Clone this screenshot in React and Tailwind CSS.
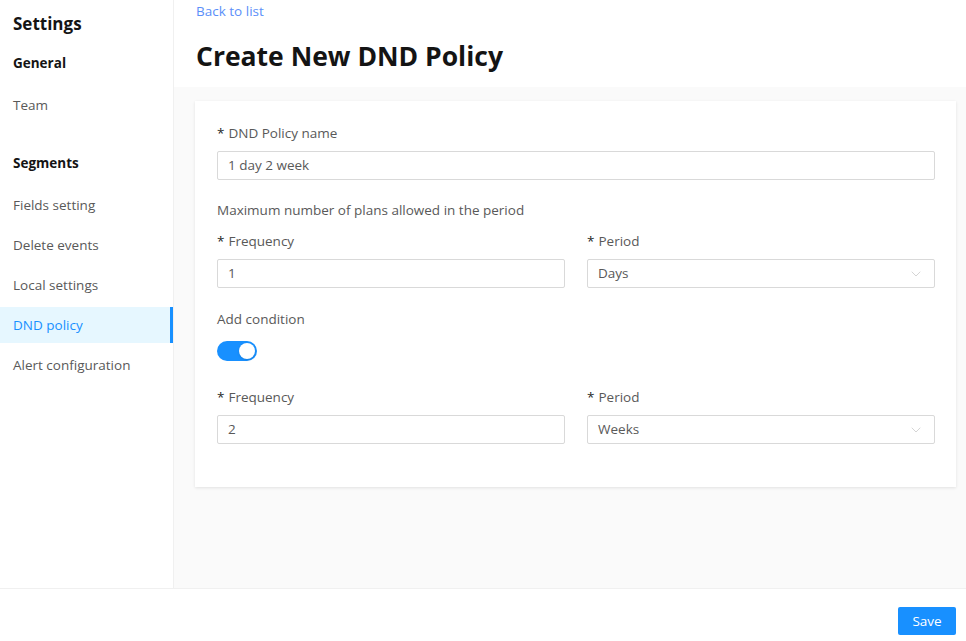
import React, { useState } from 'react';
import { ChevronDown } from 'lucide-react';

const font = { fontFamily: '"Open Sans", "Noto Sans", sans-serif' };

const NavItem = ({ label, active }) => (
  <div
    className={`h-[36px] flex items-center pl-[13px] text-[13.5px] ${
      active ? 'bg-[#e6f7ff] text-[#1890ff] border-r-[3px] border-[#1890ff]' : 'text-[#595959]'
    }`}
  >
    {label}
  </div>
);

const Label = ({ children, required }) => (
  <div className="h-[22px] flex items-center text-[13.5px] text-[#595959] mb-[7px]">
    {required && <span className="text-[#262626] mr-[4px]">*</span>}
    {children}
  </div>
);

const Input = ({ value }) => (
  <div className="h-[29px] border border-[#d9d9d9] rounded-[2px] px-[10px] flex items-center text-[13.5px] text-[#595959]">
    {value}
  </div>
);

const Select = ({ value }) => (
  <div className="h-[29px] border border-[#d9d9d9] rounded-[2px] pl-[10px] pr-[10px] flex items-center justify-between text-[13.5px] text-[#595959]">
    <span>{value}</span>
    <ChevronDown size={16} strokeWidth={1} className="text-[#bfbfbf]" />
  </div>
);

const App = () => {
  const [enabled, setEnabled] = useState(true);

  return (
    <div className="w-[966px] h-[641px] flex flex-col bg-white" style={font}>
      <div className="flex flex-1 min-h-0">
        <aside className="w-[174px] shrink-0 border-r border-[#f0f0f0] bg-white">
          <div className="pl-[13px] pt-[12px] h-[40px] text-[17px] font-bold text-[#141414] leading-[24px]">Settings</div>
          <div className="pl-[13px] h-[46px] flex items-center text-[13.5px] font-bold text-[#141414]">General</div>
          <div className="h-[38px] flex items-center pl-[13px] text-[13.5px] text-[#595959]">Team</div>
          <div className="mt-[20px] pl-[13px] h-[38px] flex items-center text-[13.5px] font-bold text-[#141414]">Segments</div>
          <div className="mt-[5px] flex flex-col gap-[4px]">
            <NavItem label="Fields setting" />
            <NavItem label="Delete events" />
            <NavItem label="Local settings" />
            <NavItem label="DND policy" active />
            <NavItem label="Alert configuration" />
          </div>
        </aside>

        <main className="flex-1 flex flex-col bg-[#fafafa]">
          <div className="bg-white h-[87px] pl-[22px]">
            <div className="h-[22px] flex items-center text-[13.5px] text-[#5b8ff9]">Back to list</div>
            <h1 className="mt-[20px] h-[30px] flex items-center text-[26.5px] font-bold text-[#141414]">Create New DND Policy</h1>
          </div>

          <div className="pl-[21px] pr-[10px] pt-[14px]">
            <div className="bg-white shadow-[0_1px_3px_rgba(0,0,0,0.1)] pl-[22px] pr-[21px] pt-[21px] pb-[43px]">
              <Label required>DND Policy name</Label>
              <Input value="1 day 2 week" />

              <div className="mt-[19px] h-[22px] flex items-center text-[13.5px] text-[#595959]">
                Maximum number of plans allowed in the period
              </div>

              <div className="grid grid-cols-2 gap-[22px] mt-[9px]">
                <div>
                  <Label required>Frequency</Label>
                  <Input value="1" />
                </div>
                <div>
                  <Label required>Period</Label>
                  <Select value="Days" />
                </div>
              </div>

              <div className="mt-[20px] h-[22px] flex items-center text-[13.5px] text-[#595959]">Add condition</div>
              <button
                onClick={() => setEnabled(!enabled)}
                className={`mt-[11px] w-[40px] h-[20px] rounded-full relative block ${enabled ? 'bg-[#1890ff]' : 'bg-[#bfbfbf]'}`}
              >
                <span
                  className={`absolute top-[2px] w-[16px] h-[16px] rounded-full bg-white shadow ${enabled ? 'left-[22px]' : 'left-[2px]'}`}
                />
              </button>

              <div className="grid grid-cols-2 gap-[22px] mt-[25px]">
                <div>
                  <Label required>Frequency</Label>
                  <Input value="2" />
                </div>
                <div>
                  <Label required>Period</Label>
                  <Select value="Weeks" />
                </div>
              </div>
            </div>
          </div>
        </main>
      </div>

      <footer className="h-[53px] shrink-0 border-t border-[#f0f0f0] bg-white flex items-start justify-end pt-[18px] pr-[10px]">
        <button className="h-[28px] w-[58px] rounded-[2px] bg-[#1890ff] text-white text-[13.5px]">Save</button>
      </footer>
    </div>
  );
};

export default App;
